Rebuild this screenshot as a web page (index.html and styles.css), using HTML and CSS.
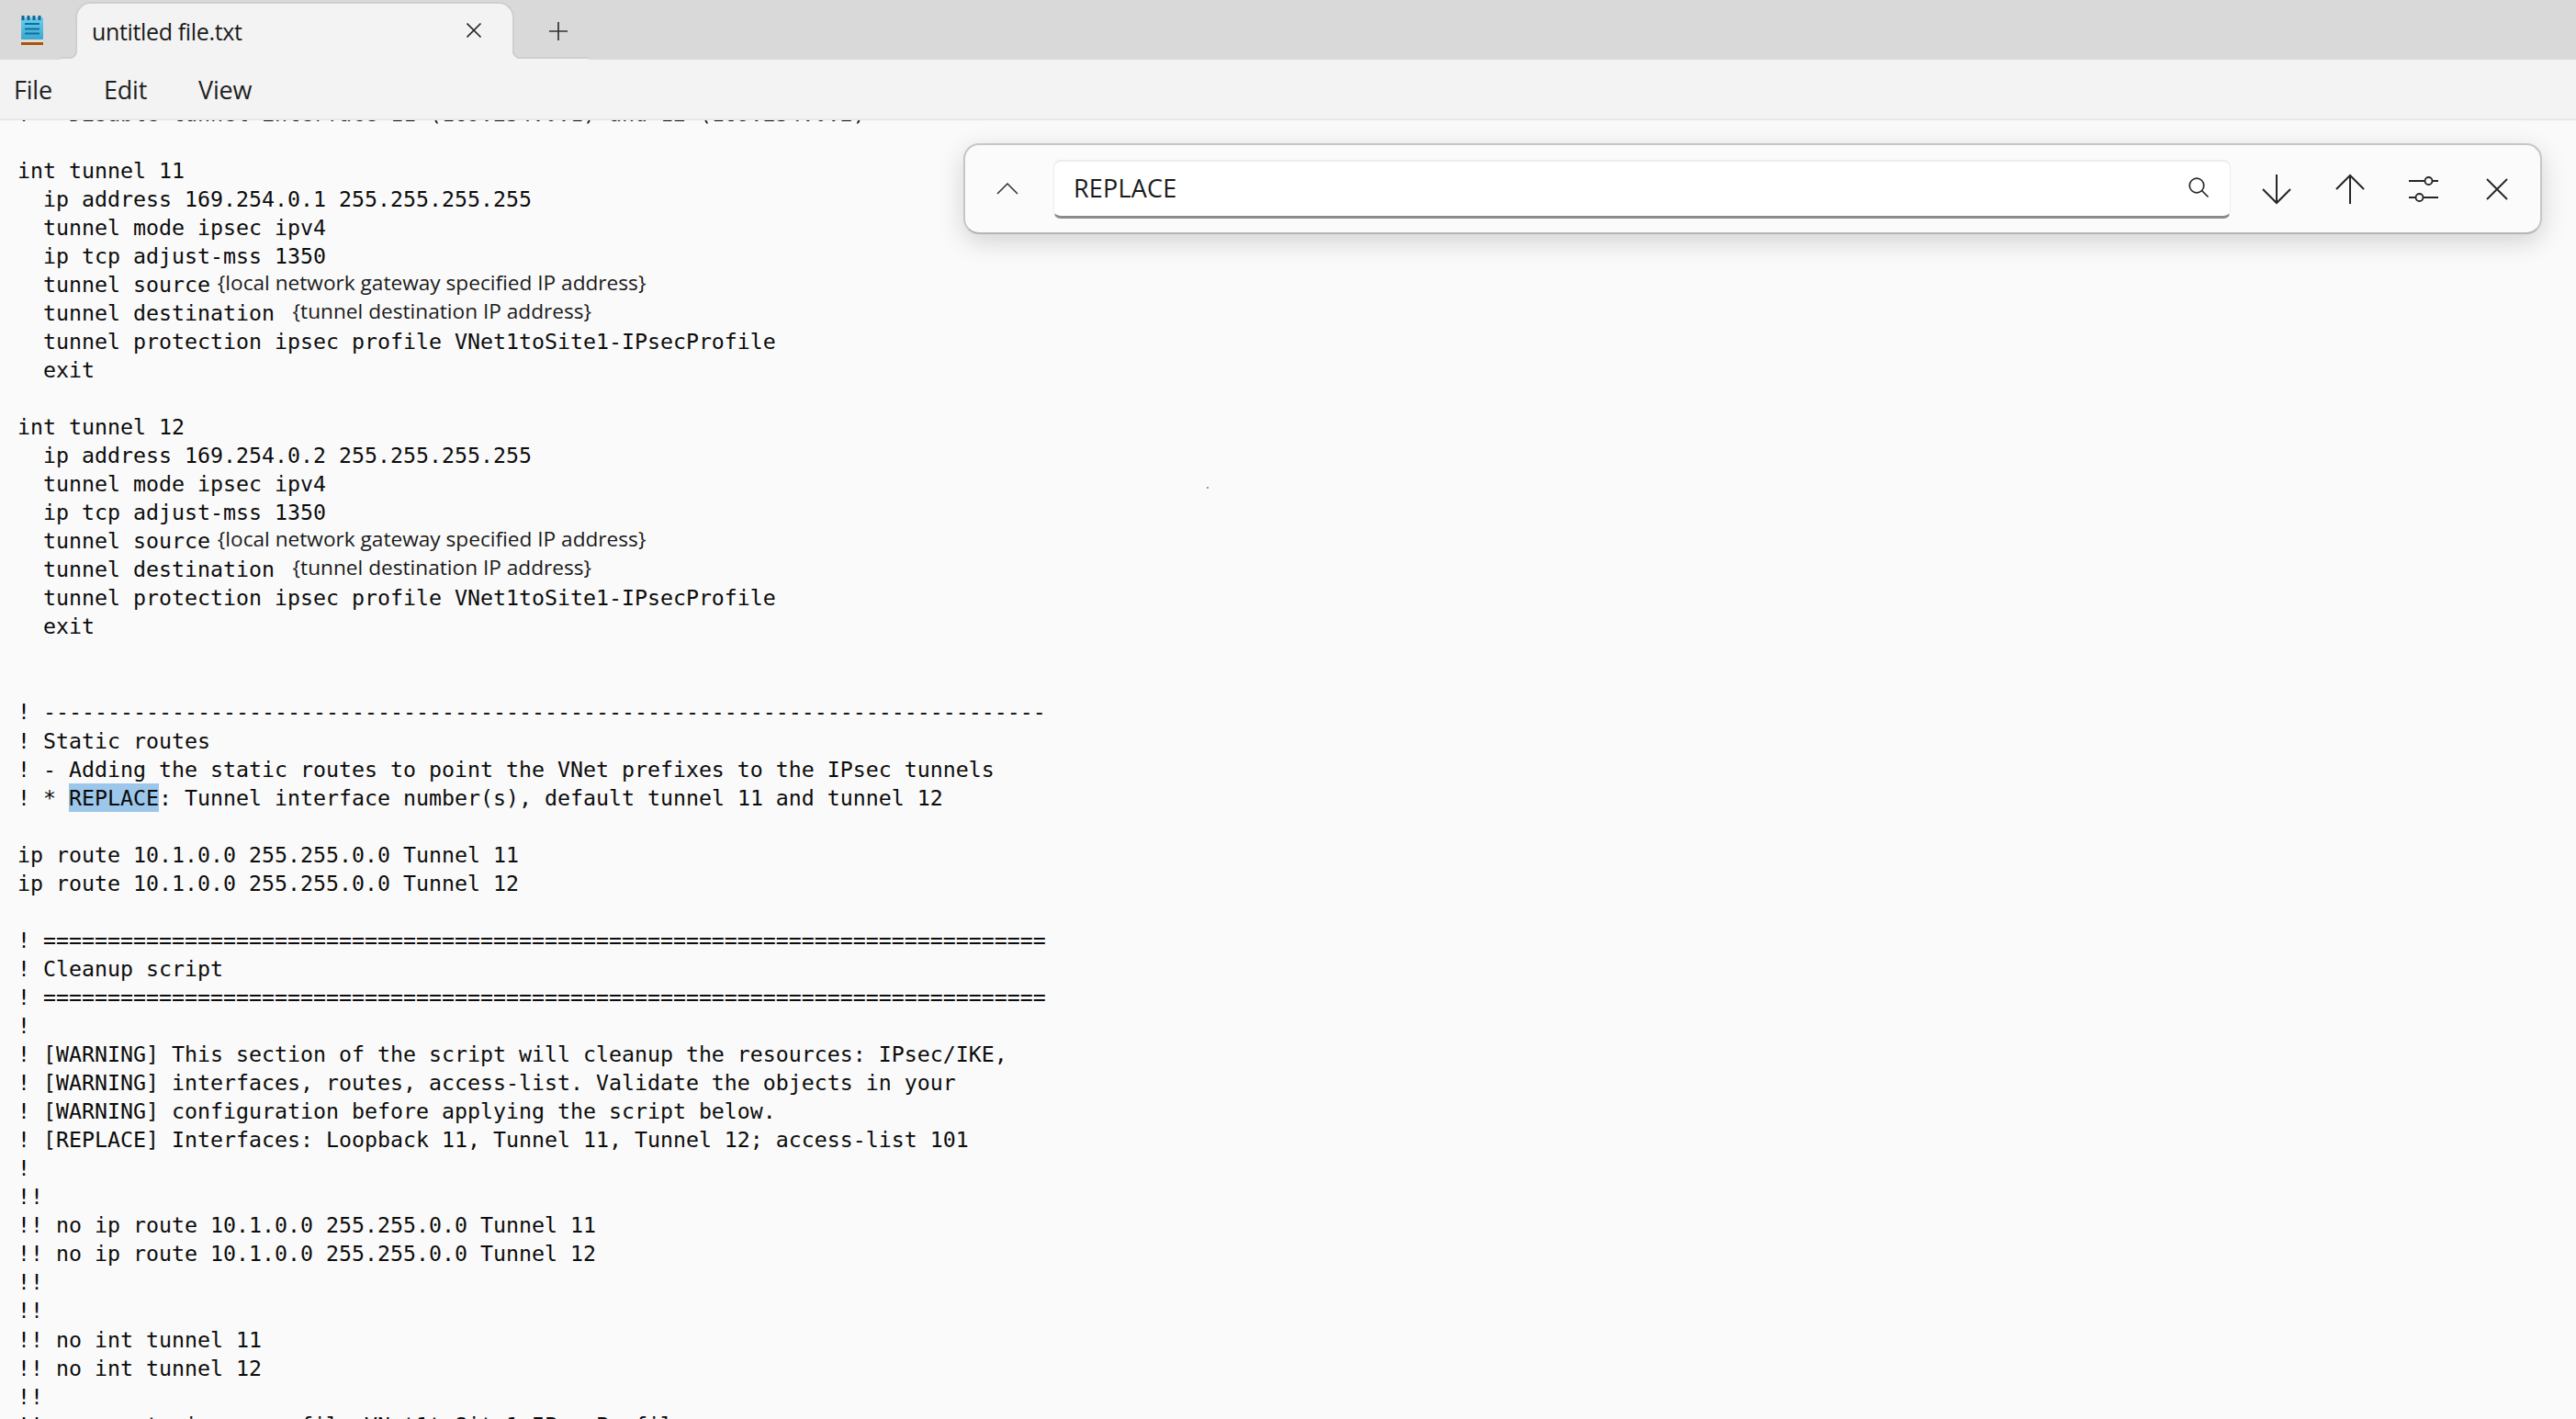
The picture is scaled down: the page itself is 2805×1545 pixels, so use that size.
FILE: index.html
```html
<!DOCTYPE html>
<html lang="en">
<head>
<meta charset="utf-8">
<title>untitled file.txt - Notepad</title>
<link rel="stylesheet" href="styles.css">
</head>
<body>
<div class="app">
  <header class="tabbar">
    <div class="appicon">
      <svg width="24" height="32" viewBox="0 0 24 32">
        <defs><linearGradient id="nb" x1="0" y1="0" x2="0" y2="1"><stop offset="0" stop-color="#6ccdee"/><stop offset="1" stop-color="#38a8d2"/></linearGradient></defs>
        <rect x="0" y="2" width="24" height="24" rx="1" fill="url(#nb)"/>
        <rect x="0" y="26" width="24" height="3" fill="#e2dcd5"/>
        <rect x="0" y="29" width="24" height="3" fill="#a9530f"/>
        <path d="M2 0v5M8 0v5M14 0v5M20 0v5" stroke="#12688f" stroke-width="3"/>
        <path d="M4 9h16M4 14.500h16M4 19.500h16" stroke="#0f6f9a" stroke-width="2"/>
      </svg>
    </div>
    <div class="tab">
      <span class="tabtitle">untitled file.txt</span>
      <svg class="tabclose" width="18" height="18" viewBox="0 0 18 18"><path d="M1.500 1.500l15 15M16.500 1.500l-15 15" fill="none" stroke="#262626" stroke-width="1.700"/></svg>
    </div>
    <div class="newtab">
      <svg width="20" height="20" viewBox="0 0 20 20"><path d="M10 0v20M0 10h20" fill="none" stroke="#333" stroke-width="1.700"/></svg>
    </div>
  </header>
  <nav class="menubar">
    <span class="menuitem">File</span>
    <span class="menuitem">Edit</span>
    <span class="menuitem">View</span>
  </nav>
  <main class="editor">
<pre class="text">! - Disable tunnel interface 11 (169.254.0.1) and 12 (169.254.0.2)

int tunnel 11
  ip address 169.254.0.1 255.255.255.255
  tunnel mode ipsec ipv4
  ip tcp adjust-mss 1350
  tunnel source<span class="prop"> {local network gateway specified IP address}</span>
  tunnel destination<span class="prop">   {tunnel destination IP address}</span>
  tunnel protection ipsec profile VNet1toSite1-IPsecProfile
  exit

int tunnel 12
  ip address 169.254.0.2 255.255.255.255
  tunnel mode ipsec ipv4
  ip tcp adjust-mss 1350
  tunnel source<span class="prop"> {local network gateway specified IP address}</span>
  tunnel destination<span class="prop">   {tunnel destination IP address}</span>
  tunnel protection ipsec profile VNet1toSite1-IPsecProfile
  exit


! ------------------------------------------------------------------------------
! Static routes
! - Adding the static routes to point the VNet prefixes to the IPsec tunnels
! * <span class="match">REPLACE</span>: Tunnel interface number(s), default tunnel 11 and tunnel 12

ip route 10.1.0.0 255.255.0.0 Tunnel 11
ip route 10.1.0.0 255.255.0.0 Tunnel 12

! ==============================================================================
! Cleanup script
! ==============================================================================
!
! [WARNING] This section of the script will cleanup the resources: IPsec/IKE,
! [WARNING] interfaces, routes, access-list. Validate the objects in your
! [WARNING] configuration before applying the script below.
! [REPLACE] Interfaces: Loopback 11, Tunnel 11, Tunnel 12; access-list 101
!
!!
!! no ip route 10.1.0.0 255.255.0.0 Tunnel 11
!! no ip route 10.1.0.0 255.255.0.0 Tunnel 12
!!
!!
!! no int tunnel 11
!! no int tunnel 12
!!
!! no crypto ipsec profile VNet1toSite1-IPsecProfile</pre>
    <span class="speck"></span>
    <section class="findbar">
      <button class="iconbtn expand" aria-label="Show replace">
        <svg width="24" height="13" viewBox="0 0 24 13"><path d="M1 12L12 1l11 11" fill="none" stroke="#333" stroke-width="1.500"/></svg>
      </button>
      <div class="findinput">
        <span class="findvalue">REPLACE</span>
        <svg width="24" height="24" viewBox="0 0 24 24"><circle cx="10" cy="10" r="7.800" fill="none" stroke="#2b2b2b" stroke-width="1.700"/><path d="M15.500 15.500l7 7" stroke="#2b2b2b" stroke-width="1.700"/></svg>
      </div>
      <div class="findactions">
        <button class="iconbtn" aria-label="Next">
          <svg width="32" height="34" viewBox="0 0 32 34"><path d="M16 1v31M1 17l15 15 15-15" fill="none" stroke="#262626" stroke-width="2"/></svg>
        </button>
        <button class="iconbtn" aria-label="Previous">
          <svg width="32" height="34" viewBox="0 0 32 34"><path d="M16 33V2M1 17L16 2l15 15" fill="none" stroke="#262626" stroke-width="2"/></svg>
        </button>
        <button class="iconbtn" aria-label="Options">
          <svg width="34" height="28" viewBox="0 0 34 28"><path d="M1 5h17M27 5h6M1 23h7M17 23h16" fill="none" stroke="#262626" stroke-width="2"/><circle cx="22.500" cy="5" r="4" fill="none" stroke="#262626" stroke-width="1.800"/><circle cx="12.500" cy="23" r="4" fill="none" stroke="#262626" stroke-width="1.800"/></svg>
        </button>
        <button class="iconbtn" aria-label="Close">
          <svg width="24" height="24" viewBox="0 0 24 24"><path d="M1 1l22 22M23 1L1 23" fill="none" stroke="#262626" stroke-width="1.900"/></svg>
        </button>
      </div>
    </section>
  </main>
</div>
</body>
</html>
```
FILE: styles.css
```css
* { box-sizing: border-box; }
html, body { margin: 0; height: 100%; overflow: hidden; }
body { background: #fafafa; color: #1b1b1b; font-family: "Open Sans", "Noto Sans", sans-serif; }
.app { display: flex; flex-direction: column; height: 100vh; }

.tabbar { height: 65px; flex: none; display: flex; align-items: flex-end; background: #d9d9d9; padding-left: 23px; }
.appicon { align-self: flex-start; margin-top: 17px; width: 24px; height: 32px; margin-right: 35px; }
.appicon svg { display: block; }
.tab { position: relative; width: 478px; height: 63px; background: #f3f3f3; border: 2px solid #cfcfcf; border-bottom: 0; border-radius: 17px 17px 0 0; display: flex; align-items: center; justify-content: space-between; padding: 0 33px 0 16px; }
.tab::before, .tab::after { content: ""; position: absolute; bottom: 0; height: 10px; background-repeat: no-repeat; }
.tab::before { right: 100%; width: 18px; background-image: linear-gradient(#d9d9d9 7px, #cfcfcf 7px, #cfcfcf 9px, #f3f3f3 9px), radial-gradient(circle at 9px 0, #d9d9d9 7px, #cfcfcf 7.500px, #cfcfcf 9px, #f3f3f3 9.500px); background-size: 9px 100%, 100% 100%; background-position: left top, left top; }
.tab::after { left: 100%; width: 83px; background-image: linear-gradient(#d9d9d9 7px, #cfcfcf 7px, #cfcfcf 9px, #f3f3f3 9px), radial-gradient(circle at 9px 0, #d9d9d9 7px, #cfcfcf 7.500px, #cfcfcf 9px, #f3f3f3 9.500px); background-size: calc(100% - 9px) 100%, 18px 100%; background-position: right top, left top; }
.tabtitle { font-size: 25px; letter-spacing: -0.35px; color: #1a1a1a; margin-top: -1px; }
.tabclose { display: block; margin-top: -4px; }
.newtab { position: relative; width: 82px; padding-left: 38px; align-self: flex-start; margin-top: 24px; }
.newtab svg { display: block; }

.menubar { height: 66px; flex: none; display: flex; align-items: center; background: #f3f3f3; border-bottom: 2px solid #e6e6e6; padding: 0 0 0 15px; gap: 56px; font-size: 27px; color: #1f1f1f; }
.menuitem { letter-spacing: -0.2px; }

.editor { flex: 1; position: relative; overflow: hidden; background: #fafafa; padding-left: 19px; }
.text { margin: -23.500px 0 0; font-family: "DejaVu Sans Mono", monospace; font-size: 23.250px; line-height: 31.050px; color: #0c0c0c; white-space: pre; }
.prop { font-family: "Open Sans", sans-serif; font-size: 22.650px; margin-left: 2px; line-height: 0; position: relative; top: -2px; color: #1a1a1a; }
.match { display: inline-block; background: #9cc7ea; line-height: 31.050px; }
.speck { position: absolute; left: 1314px; top: 399px; width: 2px; height: 2px; background: #777; border-radius: 50%; }

.findbar { position: absolute; left: 1049px; top: 25px; width: 1719px; height: 99px; display: flex; align-items: center; background: #fbfbfb; border: 2px solid #c6c6c6; border-bottom-color: #b5b5b5; border-radius: 17px; box-shadow: 0 8px 28px rgba(0,0,0,.16); }
.iconbtn { border: 0; padding: 0; background: none; display: flex; align-items: center; justify-content: center; }
.iconbtn svg { display: block; }
.expand { width: 92px; flex: none; }
.findinput { width: 1282px; height: 64px; margin-left: 4px; flex: none; display: flex; align-items: center; justify-content: space-between; background: #fff; border-top: 2px solid #ececec; border-left: 1px solid #ededed; border-right: 1px solid #ededed; border-bottom: 3px solid #8b8b8b; border-radius: 8px; padding: 0 22px 2px 21px; }
.findvalue { font-size: 27px; letter-spacing: 0.2px; color: #1a1a1a; }
.findactions { display: flex; flex: none; margin-left: 10px; }
.findactions .iconbtn { width: 80px; height: 40px; }
```
